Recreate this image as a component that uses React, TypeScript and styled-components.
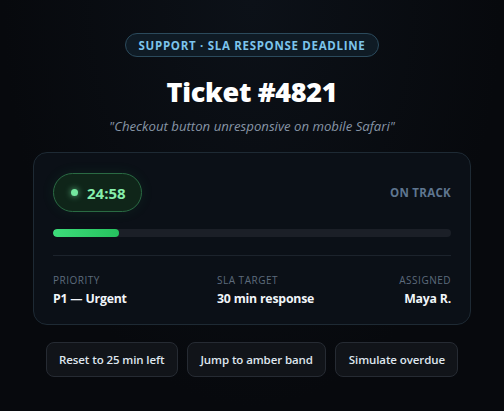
import styled, { createGlobalStyle } from 'styled-components';

const GlobalStyle = createGlobalStyle`
	html, body {
		margin: 0;
		padding: 0;
		background: #07090d;
	}
	body {
		font-family: 'Open Sans', 'Noto Sans', sans-serif;
		color: #e6edf3;
	}
`;

const meta = [
	{ label: 'Priority', value: 'P1 — Urgent', align: 'left' },
	{ label: 'SLA target', value: '30 min response', align: 'left' },
	{ label: 'Assigned', value: 'Maya R.', align: 'right' },
];

const actions = ['Reset to 25 min left', 'Jump to amber band', 'Simulate overdue'];

function App() {
	const progress = 16.6;

	return (
		<>
			<GlobalStyle />
			<Page>
				<Badge>Support · SLA response deadline</Badge>
				<Title>Ticket #4821</Title>
				<Subtitle>"Checkout button unresponsive on mobile Safari"</Subtitle>

				<Card>
					<TopRow>
						<TimerPill>
							<Dot />
							<Time>24:58</Time>
						</TimerPill>
						<Status>On track</Status>
					</TopRow>

					<Track>
						<Fill style={{ width: `${progress}%` }} />
					</Track>

					<Divider />

					<MetaGrid>
						{meta.map((m) => (
							<MetaItem key={m.label} $align={m.align}>
								<MetaLabel>{m.label}</MetaLabel>
								<MetaValue>{m.value}</MetaValue>
							</MetaItem>
						))}
					</MetaGrid>
				</Card>

				<Actions>
					{actions.map((a) => (
						<ActionButton key={a}>{a}</ActionButton>
					))}
				</Actions>
			</Page>
		</>
	);
}

export default App;

const Page = styled.div`
	width: 504px;
	height: 411px;
	box-sizing: border-box;
	padding-top: 33px;
	display: flex;
	flex-direction: column;
	align-items: center;
	background: radial-gradient(ellipse at 50% 0%, #0c1118 0%, #07090d 70%);
`;

const Badge = styled.div`
	height: 24px;
	box-sizing: border-box;
	padding: 0 13px;
	display: flex;
	align-items: center;
	border: 1px solid #2b4a5c;
	border-radius: 12px;
	background: #0f1b25;
	color: #7cc4ec;
	font-size: 11.5px;
	font-weight: 700;
	letter-spacing: 0.7px;
	text-transform: uppercase;
`;

const Title = styled.h1`
	margin: 18px 0 0;
	font-size: 27px;
	font-weight: 800;
	line-height: 34px;
	color: #ffffff;
	letter-spacing: -0.3px;
`;

const Subtitle = styled.p`
	margin: 8px 0 0;
	font-size: 13.2px;
	font-style: italic;
	line-height: 18px;
	color: #8795a6;
`;

const Card = styled.div`
	margin-top: 17px;
	width: 438px;
	box-sizing: border-box;
	padding: 20px 19px 17px;
	border: 1px solid #1e2a34;
	border-radius: 14px;
	background: #0b1017;
`;

const TopRow = styled.div`
	display: flex;
	align-items: center;
	justify-content: space-between;
`;

const TimerPill = styled.div`
	height: 39px;
	width: 89px;
	box-sizing: border-box;
	display: flex;
	align-items: center;
	gap: 9px;
	padding-left: 17px;
	border: 1px solid #2a6a43;
	border-radius: 20px;
	background: #0f2519;
	box-shadow: 0 0 14px rgba(52, 211, 103, 0.08);
`;

const Dot = styled.span`
	width: 7px;
	height: 7px;
	border-radius: 50%;
	background: #74e8a0;
	box-shadow: 0 0 6px rgba(116, 232, 160, 0.8);
`;

const Time = styled.span`
	font-size: 15px;
	font-weight: 700;
	color: #86efac;
	font-variant-numeric: tabular-nums;
`;

const Status = styled.span`
	font-size: 11.5px;
	font-weight: 700;
	letter-spacing: 0.3px;
	color: #5f7690;
	text-transform: uppercase;
`;

const Track = styled.div`
	margin-top: 17px;
	height: 8px;
	border-radius: 4px;
	background: #1b1f27;
	overflow: hidden;
`;

const Fill = styled.div`
	height: 100%;
	border-radius: 4px;
	background: linear-gradient(90deg, #3ddc7a, #26c25e);
`;

const Divider = styled.div`
	margin-top: 18px;
	height: 1px;
	background: #1c232c;
`;

const MetaGrid = styled.div`
	margin-top: 18px;
	display: grid;
	grid-template-columns: 164px 1fr auto;
`;

const MetaItem = styled.div<{ $align: string }>`
	display: flex;
	flex-direction: column;
	gap: 3px;
	text-align: ${(p) => p.$align};
`;

const MetaLabel = styled.span`
	font-size: 10px;
	letter-spacing: 0.5px;
	text-transform: uppercase;
	color: #5d6b7c;
	line-height: 13px;
`;

const MetaValue = styled.span`
	font-size: 12.3px;
	font-weight: 700;
	letter-spacing: -0.2px;
	color: #f1f5f9;
	line-height: 17px;
`;

const Actions = styled.div`
	margin-top: 17px;
	display: flex;
	gap: 9px;
`;

const ActionButton = styled.button`
	height: 35px;
	padding: 0 12.5px;
	border: 1px solid #262b33;
	border-radius: 8px;
	background: #111419;
	color: #dfe6ee;
	font-family: inherit;
	font-size: 11.5px;
	font-weight: 600;
	letter-spacing: -0.1px;
	cursor: pointer;
`;
